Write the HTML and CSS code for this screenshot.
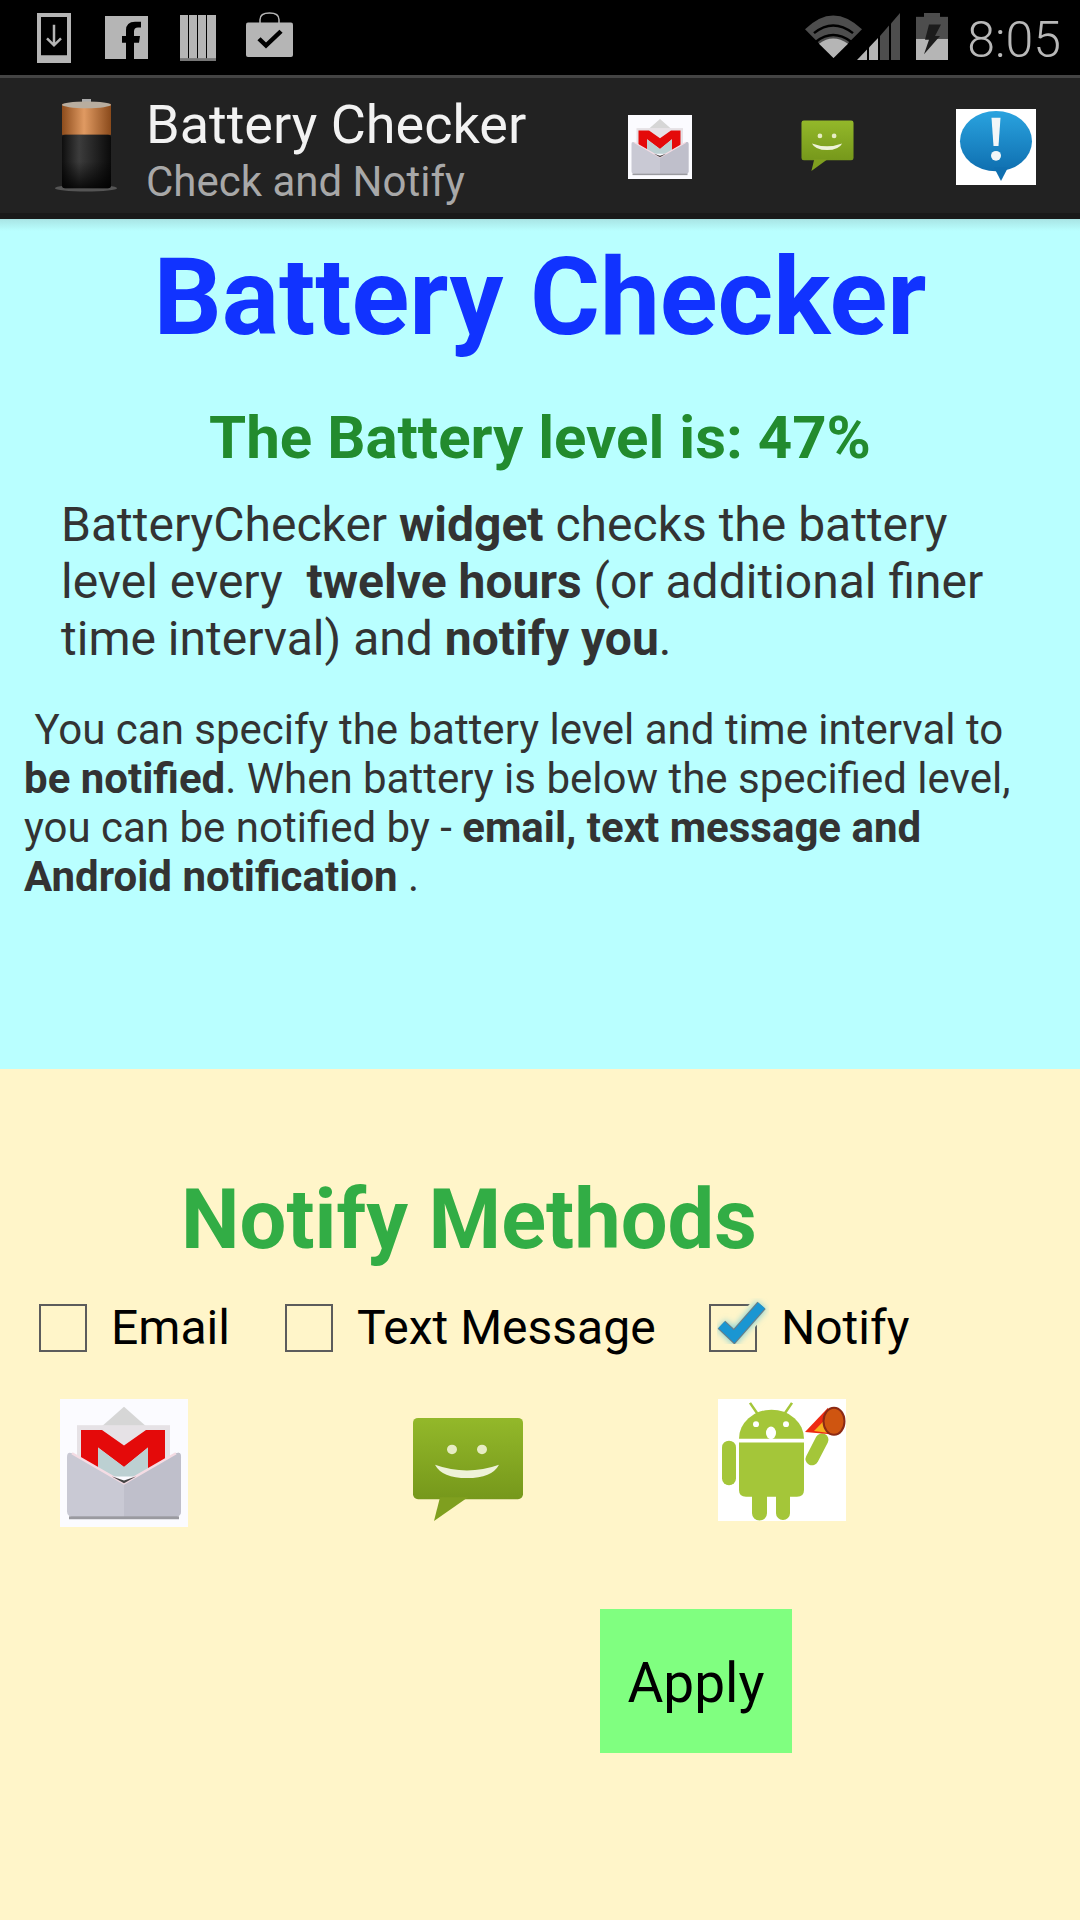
FILE: index.html
```html
<!DOCTYPE html>
<html lang="en">
    <head>
        <title>Battery Checker</title>
        <meta charset="utf-8">
        <meta name="viewport" content="width=device-width, initial-scale=1">
        <link rel="stylesheet" href="styles.css">
    </head>
    <body>
        <svg class="defs" width="0" height="0">
            <defs>
                <linearGradient id="smsGreen" x1="0" y1="0" x2="0" y2="1">
                    <stop offset="0" stop-color="#93b82a"/>
                    <stop offset="1" stop-color="#76981b"/>
                </linearGradient>
                <linearGradient id="alertBlue" x1="0" y1="0" x2="0" y2="1">
                    <stop offset="0" stop-color="#2aa3df"/>
                    <stop offset="1" stop-color="#0f6fb0"/>
                </linearGradient>
                <linearGradient id="copper" x1="0" y1="0" x2="1" y2="0">
                    <stop offset="0" stop-color="#8d4c1c"/>
                    <stop offset="0.45" stop-color="#e09a62"/>
                    <stop offset="1" stop-color="#8a4a1b"/>
                </linearGradient>
                <linearGradient id="cellBlack" x1="0" y1="0" x2="1" y2="0">
                    <stop offset="0" stop-color="#0e0e0e"/>
                    <stop offset="0.35" stop-color="#3c3c3c"/>
                    <stop offset="1" stop-color="#0a0a0a"/>
                </linearGradient>
                <linearGradient id="cellFade" x1="0" y1="0" x2="0" y2="1">
                    <stop offset="0.5" stop-color="#000" stop-opacity="0"/>
                    <stop offset="1" stop-color="#000" stop-opacity="0.8"/>
                </linearGradient>
                <symbol id="gmailIcon" viewBox="0 0 128 132" preserveAspectRatio="none">
                    <rect width="128" height="132" fill="#fbfbff"/>
                    <polygon points="40,30 64,8 88,30" fill="#d6d6d6"/>
                    <rect x="17" y="27" width="93" height="50" fill="#e6e2e6"/>
                    <polygon points="21,32 42,32 64,48 86,32 105,32 105,80 88,80 88,50 64,70 38,50 38,80 21,80" fill="#e40a0a"/>
                    <polygon points="38,50 64,70 88,50 88,80 38,80" fill="#bcd0d2"/>
                    <path d="M7 60Q7 54 12 56L64 87L116 56Q121 54 121 60V116Q121 122 113 122H15Q7 122 7 116Z" fill="#c9c9d4"/>
                    <path d="M64 87L116 56Q121 54 121 60V116Q121 122 113 122H64Z" fill="#bfbfcb"/>
                    <path d="M12 56L64 87L116 56" fill="none" stroke="#f4dce4" stroke-width="2.500"/>
                    <path d="M52 80L64 87L76 80L64 84Z" fill="#444"/>
                    <rect x="9" y="121" width="110" height="3" fill="#9a9aa0"/>
                </symbol>
                <symbol id="smsIcon" viewBox="0 0 112 111" preserveAspectRatio="none">
                    <rect x="1" y="1" width="110" height="85" rx="5" fill="url(#smsGreen)"/>
                    <polygon points="28,84 22,109 56,84" fill="#7f9f1f"/>
                    <circle cx="40" cy="34" r="5" fill="#e6ecc4"/>
                    <circle cx="70" cy="34" r="5" fill="#e6ecc4"/>
                    <path d="M23 50Q55 62 87 50Q80 64 55 64Q30 64 23 50Z" fill="#eef2d8"/>
                </symbol>
            </defs>
        </svg>

        <div class="status-bar">
            <div class="status-left">
                <svg class="ic-download" viewBox="0 0 34 51" preserveAspectRatio="none">
                    <path d="M0 0H34V51H0ZM4 4V43H30V4Z" fill="#b5b5b5" fill-rule="evenodd"/>
                    <path d="M17 12V31M10 26L17 33L24 26" fill="none" stroke="#b5b5b5" stroke-width="2.500"/>
                </svg>
                <svg class="ic-fb" viewBox="0 0 43 45" preserveAspectRatio="none">
                    <path d="M0 0H43V45H29V28H34L35 21H29V16Q29 12 33 12H36V6H30Q21 6 21 15V21H17V28H21V45H0Z" fill="#b5b5b5"/>
                </svg>
                <svg class="ic-books" viewBox="0 0 36 48" preserveAspectRatio="none">
                    <rect x="0" y="0" width="8" height="48" fill="#b5b5b5"/>
                    <rect x="9" y="0" width="8" height="48" fill="#b5b5b5"/>
                    <rect x="18" y="0" width="8" height="48" fill="#b5b5b5"/>
                    <rect x="27" y="0" width="9" height="48" fill="#b5b5b5"/>
                    <rect x="0" y="45" width="36" height="3" fill="#777"/>
                </svg>
                <svg class="ic-bag" viewBox="0 0 47 47" preserveAspectRatio="none">
                    <path d="M14 12V8Q14 1 23.500 1Q33 1 33 8V12" fill="none" stroke="#b5b5b5" stroke-width="1.500"/>
                    <rect x="0" y="11" width="47" height="36" rx="2" fill="#b5b5b5"/>
                    <path d="M13 28L20 35L35 20" fill="none" stroke="#000" stroke-width="4.500"/>
                </svg>
            </div>
            <div class="status-right">
                <svg class="ic-wifi" viewBox="0 0 57 45" preserveAspectRatio="none">
                    <path d="M0 15Q28 -14 57 15L28.500 45Z" fill="#4d4d4d"/>
                    <path d="M14 30Q28 19 43 30L28.500 45Z" fill="#b5b5b5"/>
                    <path d="M9 19Q28 3 48 19" fill="none" stroke="#000" stroke-width="2.500"/>
                    <path d="M11 28Q28 14 46 28" fill="none" stroke="#000" stroke-width="2.500"/>
                </svg>
                <svg class="ic-signal" viewBox="0 0 43 49" preserveAspectRatio="none">
                    <polygon points="0,49 10,38 10,49" fill="#b5b5b5"/>
                    <polygon points="12,36 21,26 21,49 12,49" fill="#b5b5b5"/>
                    <polygon points="23,24 32,13 32,49 23,49" fill="#4d4d4d"/>
                    <polygon points="34,11 43,0 43,49 34,49" fill="#4d4d4d"/>
                </svg>
                <svg class="ic-battery" viewBox="0 0 32 49" preserveAspectRatio="none">
                    <rect x="8" y="0" width="16" height="5" fill="#4d4d4d"/>
                    <rect x="0" y="4" width="32" height="23" fill="#4d4d4d"/>
                    <rect x="0" y="27" width="32" height="22" fill="#b5b5b5"/>
                    <polygon points="13,12 25,12 19,24 24,24 8,43 13,28 9,28" fill="#1c1c1c"/>
                </svg>
                <span class="clock">8:05</span>
            </div>
        </div>

        <div class="action-bar">
            <svg class="app-icon" viewBox="0 0 62 96" preserveAspectRatio="none">
                <ellipse cx="31" cy="92" rx="31" ry="3.500" fill="#555"/>
                <rect x="27" y="0" width="9" height="6" fill="#aaa"/>
                <rect x="7" y="5" width="49" height="32" fill="url(#copper)"/>
                <ellipse cx="31.500" cy="6" rx="24.500" ry="3.500" fill="#b8ad9f"/>
                <rect x="7" y="37" width="49" height="55" rx="3" fill="url(#cellBlack)"/>
                <rect x="7" y="37" width="49" height="55" rx="3" fill="url(#cellFade)"/>
            </svg>
            <div class="app-titles">
                <div class="app-title">Battery Checker</div>
                <div class="app-subtitle">Check and Notify</div>
            </div>
            <svg class="bar-gmail"><use href="#gmailIcon"/></svg>
            <svg class="bar-sms"><use href="#smsIcon"/></svg>
            <svg class="bar-alert" viewBox="0 0 80 78" preserveAspectRatio="none">
                <rect width="80" height="78" fill="#fff"/>
                <ellipse cx="40" cy="33" rx="36" ry="31" fill="url(#alertBlue)"/>
                <polygon points="38,60 52,60 45,74" fill="#0f6fb0"/>
                <path d="M35.500 9H44.500L42.500 38H37.500Z" fill="#f2f6f8"/>
                <circle cx="40" cy="48" r="5" fill="#f2f6f8"/>
            </svg>
        </div>
        <div class="bar-shadow"></div>

        <div class="info-panel">
            <h1 class="main-title">Battery Checker</h1>
            <h2 class="level">The Battery level is: 47%</h2>
            <p class="intro">BatteryChecker <b>widget</b> checks the battery level every &nbsp;<b>twelve hours</b> (or additional finer time interval) and <b>notify you</b>.</p>
            <p class="details">&nbsp;You can specify the battery level and time interval to <b>be notified</b>. When battery is below the specified level, you can be notified by - <b>email, text message and Android notification</b> .</p>
        </div>

        <div class="methods-panel">
            <h2 class="methods-title">Notify Methods</h2>
            <div class="check-row">
                <label class="check check-email"><span class="box"></span>Email</label>
                <label class="check check-text"><span class="box"></span>Text Message</label>
                <label class="check"><span class="box">
                    <svg class="tick" viewBox="0 0 70 62">
                        <defs><filter id="glow" x="-30%" y="-30%" width="160%" height="160%"><feGaussianBlur stdDeviation="4"/></filter></defs>
                        <path d="M40 32L60 10" fill="none" stroke="#fff5c9" stroke-width="26"/>
                        <path d="M6 36L23 52L60 10" fill="none" stroke="#7fd0d8" stroke-width="17" filter="url(#glow)"/>
                        <path d="M6 36L23 52L60 10" fill="none" stroke="#6d7d85" stroke-width="15"/>
                        <path d="M6 36L23 52L60 10" fill="none" stroke="#1a96d2" stroke-width="12"/>
                    </svg>
                </span>Notify</label>
            </div>
            <div class="method-icons">
                <svg class="big-gmail"><use href="#gmailIcon"/></svg>
                <svg class="big-sms"><use href="#smsIcon"/></svg>
                <svg class="big-android" viewBox="0 0 128 126" preserveAspectRatio="none">
                    <rect width="128" height="126" fill="#fff"/>
                    <path d="M21 41A32.500 30 0 0 1 86 41Z" fill="#a4c639"/>
                    <path d="M32 4L40 16M74 4L66 16" stroke="#a4c639" stroke-width="2.500"/>
                    <circle cx="38" cy="26" r="3" fill="#fff"/>
                    <circle cx="68" cy="26" r="3" fill="#fff"/>
                    <ellipse cx="53" cy="35" rx="5" ry="6.500" fill="#fff"/>
                    <path d="M21 45H86V94Q86 101 79 101H72V118A7 7 0 0 1 58 118V101H49V118A7 7 0 0 1 34 118V101H28Q21 101 21 94Z" fill="#a4c639"/>
                    <rect x="4" y="43" width="14" height="46" rx="7" fill="#a4c639"/>
                    <path d="M104 42L94 62" stroke="#a4c639" stroke-width="13" stroke-linecap="round"/>
                    <polygon points="87,34 110,9 118,37" fill="#ee2a12"/>
                    <polygon points="96,33 110,18 111,35" fill="#f6b01e"/>
                    <ellipse cx="116" cy="23" rx="10.500" ry="14" fill="#cf5510" stroke="#8c2a14" stroke-width="2"/>
                </svg>
            </div>
            <div class="apply-row">
                <button class="apply">Apply</button>
            </div>
        </div>
    </body>
</html>
```

FILE: styles.css
```css
html, body {
    margin: 0;
    padding: 0;
}
body {
    width: 1080px;
    height: 1920px;
    overflow: hidden;
    background: #fff5c9;
    font-family: Roboto, sans-serif;
}
.defs {
    position: absolute;
}
.status-bar {
    height: 75px;
    background: #000;
    display: flex;
    justify-content: space-between;
}
.status-left {
    display: flex;
    align-items: flex-start;
    padding-left: 37px;
}
.ic-download {
    width: 34px;
    height: 50px;
    margin-top: 13px;
}
.ic-fb {
    width: 43px;
    height: 43px;
    margin: 16px 0 0 34px;
}
.ic-books {
    width: 36px;
    height: 46px;
    margin: 15px 0 0 32px;
}
.ic-bag {
    width: 47px;
    height: 45px;
    margin: 12px 0 0 30px;
}
.status-right {
    display: flex;
    align-items: flex-start;
    padding-right: 19px;
}
.ic-wifi {
    width: 57px;
    height: 43px;
    margin-top: 15px;
}
.ic-signal {
    width: 43px;
    height: 47px;
    margin: 13px 0 0 -5px;
}
.ic-battery {
    width: 32px;
    height: 47px;
    margin: 13px 0 0 16px;
}
.clock {
    margin: 11px 0 0 19px;
    font-size: 50px;
    line-height: 58px;
    font-weight: 300;
    color: #b8b8b8;
}
.action-bar {
    height: 138px;
    border-top: 3px solid #444;
    box-sizing: border-box;
    background: #222;
    display: flex;
    align-items: flex-start;
    padding-left: 55px;
}
.app-icon {
    width: 62px;
    height: 93px;
    margin-top: 21px;
}
.app-titles {
    width: 481px;
    margin-left: 30px;
    padding-top: 16px;
}
.app-title {
    margin-left: -1px;
    font-size: 54px;
    line-height: 62px;
    color: #f2f2f2;
}
.app-subtitle {
    margin: 2px 0 0 -1px;
    font-size: 42px;
    line-height: 48px;
    color: #a8a8a8;
}
.bar-gmail {
    width: 64px;
    height: 64px;
    margin-top: 37px;
}
.bar-sms {
    width: 53px;
    height: 52px;
    margin: 42px 0 0 109px;
}
.bar-alert {
    width: 80px;
    height: 76px;
    margin: 31px 0 0 102px;
}
.bar-shadow {
    height: 6px;
    background: #1a1a1a;
}
.info-panel {
    height: 850px;
    box-sizing: border-box;
    padding-top: 16px;
    background: linear-gradient(#a8e4e4 0, #b9ffff 12px);
    color: #333;
    overflow: hidden;
}
.main-title {
    margin: 0;
    font-size: 107px;
    line-height: 126px;
    font-weight: 700;
    color: #1133ff;
    text-align: center;
}
.level {
    margin: 42px 0 0;
    font-size: 60px;
    line-height: 70px;
    font-weight: 700;
    color: #228b2e;
    text-align: center;
}
.intro {
    margin: 23px 40px 0 61px;
    font-size: 48px;
    line-height: 57px;
}
.details {
    margin: 38px 40px 0 24px;
    font-size: 42px;
    line-height: 49px;
}
.methods-title {
    margin: 0;
    padding: 102px 0 0 181px;
    font-size: 83px;
    line-height: 98px;
    font-weight: 700;
    color: #32ad45;
}
.check-row {
    display: flex;
    margin-top: 31px;
    padding-left: 39px;
}
.check {
    display: flex;
    align-items: center;
    font-size: 48px;
    line-height: 56px;
    color: #000;
}
.check-email {
    width: 246px;
}
.check-text {
    width: 424px;
}
.box {
    position: relative;
    box-sizing: border-box;
    width: 48px;
    height: 48px;
    margin-right: 24px;
    border: 2px solid #5c5c5c;
}
.tick {
    position: absolute;
    left: 6px;
    top: -8px;
    width: 52px;
    height: 46px;
}
.method-icons {
    display: flex;
    align-items: flex-start;
    margin-top: 43px;
    padding-left: 60px;
}
.method-icons svg, .action-bar svg {
    filter: blur(0.6px);
}
.big-gmail {
    width: 128px;
    height: 128px;
}
.big-sms {
    width: 112px;
    height: 106px;
    margin: 18px 0 0 224px;
}
.big-android {
    width: 128px;
    height: 122px;
    margin-left: 194px;
}
.apply-row {
    margin-top: 82px;
    padding-left: 600px;
}
.apply {
    display: block;
    width: 192px;
    height: 144px;
    padding: 4px 0 0;
    border: 0;
    background: #80ff80;
    font-family: Roboto, sans-serif;
    font-size: 55px;
    color: #000;
}
```
